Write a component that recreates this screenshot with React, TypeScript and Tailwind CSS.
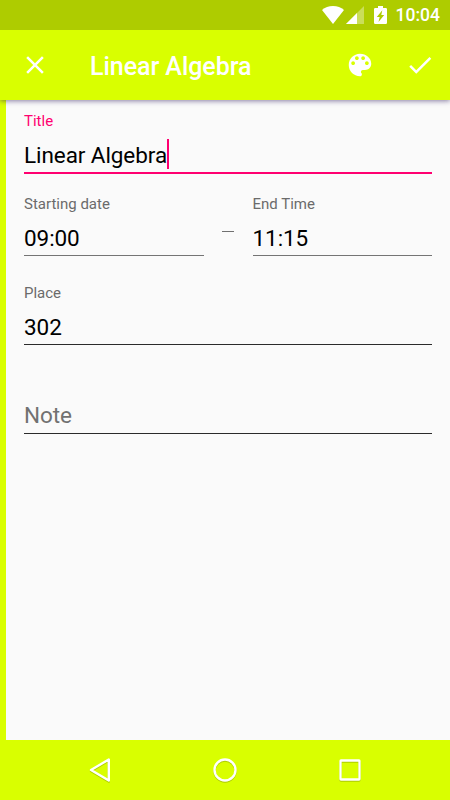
import React from "react";
import { MdCheck, MdClose } from "react-icons/md";

interface FieldProps {
  label?: string;
  value?: string;
  placeholder?: string;
  focused?: boolean;
  lineClass?: string;
}

const Field: React.FC<FieldProps> = ({
  label,
  value,
  placeholder,
  focused = false,
  lineClass = "h-px bg-[#2b2b2b]",
}) => (
  <div className="flex flex-col">
    <span
      className={`h-[18px] text-[15px] leading-[18px] ${
        focused ? "text-[#ff0070]" : "text-[#6b6b6b]"
      }`}
    >
      {label}
    </span>
    <div className="mt-3 mb-1 flex h-[26px] items-center text-[22.5px] leading-[26px] tracking-[-0.08px]">
      {value ? (
        <span className="text-black">{value}</span>
      ) : (
        <span className="mb-0.5 text-[#717171]">{placeholder}</span>
      )}
      {focused && <span className="-mt-[3px] h-[30px] w-0.5 shrink-0 bg-[#ff0070]" />}
    </div>
    <div className={focused ? "h-0.5 bg-[#ff0070]" : lineClass} />
  </div>
);

const StatusBar = () => (
  <div className="z-20 flex h-[30px] shrink-0 items-center justify-end bg-[#aecc00] pr-2.5 text-white">
    <svg className="h-[18px] w-[22px]" viewBox="0 0 22 18" fill="currentColor">
      <path d="M11 18 0 4C3 1.500 6.700 0 11 0s8 1.500 11 4z" />
    </svg>
    <svg className="ml-0.5 h-[18px] w-[18px]" viewBox="0 0 18 18" fill="currentColor">
      <path d="M18 0v18H0z" opacity=".35" />
      <path d="M11 7v11H0z" />
    </svg>
    <svg className="ml-2.5 h-[18px] w-[13px]" viewBox="0 0 13 18" fill="currentColor">
      <path
        fillRule="evenodd"
        d="M4 0h5v2h2.800q1.200 0 1.200 1.200v13.600q0 1.200-1.200 1.200H1.200Q0 18 0 16.800V3.200Q0 2 1.200 2H4zM8.300 4.300 2.800 11h2.900l-1.200 5L10.200 9H7.300z"
      />
    </svg>
    <span className="ml-[9px] pt-px text-[17.5px] leading-[29px] font-medium">10:04</span>
  </div>
);

const PaletteIcon = () => (
  <svg className="size-[30px]" viewBox="0 0 24 24" fill="currentColor">
    <path d="M12 3c-4.970 0-9 4.030-9 9s4.030 9 9 9c.83 0 1.500-.67 1.500-1.500 0-.39-.15-.74-.39-1.010-.23-.26-.38-.61-.38-.99 0-.83.67-1.500 1.500-1.500H16c2.760 0 5-2.240 5-5 0-4.420-4.030-8-9-8zm-5.500 9c-.83 0-1.500-.67-1.500-1.500S5.670 9 6.500 9 8 9.670 8 10.500 7.330 12 6.500 12zm3-4C8.670 8 8 7.330 8 6.500S8.670 5 9.500 5s1.500.67 1.500 1.500S10.330 8 9.500 8zm5 0c-.83 0-1.500-.67-1.500-1.500S13.670 5 14.500 5s1.500.67 1.500 1.500S15.330 8 14.500 8zm3 4c-.83 0-1.500-.67-1.500-1.500S16.670 9 17.500 9s1.500.67 1.500 1.500-.67 1.500-1.500 1.500z" />
  </svg>
);

const AppBar = () => (
  <header className="z-10 flex h-[70px] shrink-0 items-center bg-[#d9ff00] px-5 text-white shadow-[0_1px_5px_rgba(40,20,90,0.55)]">
    <MdClose className="size-[30px]" />
    <h1 className="ml-10 flex-1 pt-[3px] text-[25px] leading-[30px] font-medium tracking-[-0.05px]">
      Linear Algebra
    </h1>
    <PaletteIcon />
    <MdCheck className="-mr-[5px] ml-[30px] size-[30px]" />
  </header>
);

const NavBar = () => (
  <nav className="flex h-[60px] shrink-0 items-center justify-center gap-[95px] bg-[#d9ff00]">
    <svg
      className="size-[30px] drop-shadow-[0_1px_0.5px_rgba(0,0,0,0.2)]"
      viewBox="0 0 30 30"
      fill="none"
      stroke="white"
      strokeWidth="2.4"
      strokeLinejoin="round"
    >
      <path d="M23.800 4.500v21L6 15z" />
    </svg>
    <svg
      className="size-[30px] drop-shadow-[0_1px_0.5px_rgba(0,0,0,0.2)]"
      viewBox="0 0 30 30"
      fill="none"
      stroke="white"
      strokeWidth="2.4"
    >
      <circle cx="15" cy="15" r="10.500" />
    </svg>
    <svg
      className="size-[30px] drop-shadow-[0_1px_0.5px_rgba(0,0,0,0.2)]"
      viewBox="0 0 30 30"
      fill="none"
      stroke="white"
      strokeWidth="2.3"
    >
      <rect x="5.500" y="5.500" width="19" height="19" rx="0.500" />
    </svg>
  </nav>
);

const App: React.FC = () => (
  <div className="flex h-[800px] w-[450px] flex-col overflow-hidden bg-[#fafafa] font-[Roboto,sans-serif]">
    <StatusBar />
    <AppBar />
    <main className="flex flex-1 flex-col border-l-[6px] border-[#d9ff00] px-[18px] pt-3">
      <Field label="Title" value="Linear Algebra" focused />
      <div className="mt-[21px] flex">
        <div className="w-[180px]">
          <Field label="Starting date" value="09:00" lineClass="h-px bg-[#747474]" />
        </div>
        <div className="flex w-[48.5px] justify-center pt-9">
          <span className="h-px w-3 bg-[#707070]" />
        </div>
        <div className="flex-1">
          <Field label="End Time" value="11:15" lineClass="h-px bg-[#747474]" />
        </div>
      </div>
      <div className="mt-7 flex flex-col gap-7">
        <Field label="Place" value="302" />
        <Field placeholder="Note" />
      </div>
    </main>
    <NavBar />
  </div>
);

export default App;
